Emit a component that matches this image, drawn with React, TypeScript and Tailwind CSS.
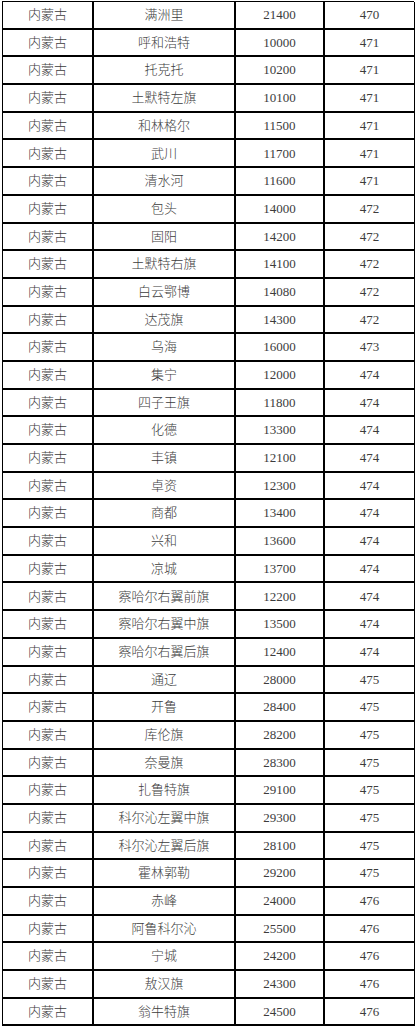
const rows: [string, string, string][] = [
  ["满洲里", "21400", "470"],
  ["呼和浩特", "10000", "471"],
  ["托克托", "10200", "471"],
  ["土默特左旗", "10100", "471"],
  ["和林格尔", "11500", "471"],
  ["武川", "11700", "471"],
  ["清水河", "11600", "471"],
  ["包头", "14000", "472"],
  ["固阳", "14200", "472"],
  ["土默特右旗", "14100", "472"],
  ["白云鄂博", "14080", "472"],
  ["达茂旗", "14300", "472"],
  ["乌海", "16000", "473"],
  ["集宁", "12000", "474"],
  ["四子王旗", "11800", "474"],
  ["化德", "13300", "474"],
  ["丰镇", "12100", "474"],
  ["卓资", "12300", "474"],
  ["商都", "13400", "474"],
  ["兴和", "13600", "474"],
  ["凉城", "13700", "474"],
  ["察哈尔右翼前旗", "12200", "474"],
  ["察哈尔右翼中旗", "13500", "474"],
  ["察哈尔右翼后旗", "12400", "474"],
  ["通辽", "28000", "475"],
  ["开鲁", "28400", "475"],
  ["库伦旗", "28200", "475"],
  ["奈曼旗", "28300", "475"],
  ["扎鲁特旗", "29100", "475"],
  ["科尔沁左翼中旗", "29300", "475"],
  ["科尔沁左翼后旗", "28100", "475"],
  ["霍林郭勒", "29200", "475"],
  ["赤峰", "24000", "476"],
  ["阿鲁科尔沁", "25500", "476"],
  ["宁城", "24200", "476"],
  ["敖汉旗", "24300", "476"],
  ["翁牛特旗", "24500", "476"],
];

const cell = "flex h-[27.7px] items-center justify-center border-b-2 border-r-2 border-black";

export default function App() {
  return (
    <div className="min-h-screen bg-white pl-[2px] pt-[1px] text-[13px] font-light text-[#3c3c3c] [font-family:'Liberation_Serif','Noto_Sans_CJK_SC',serif]">
      <div className="grid w-[412px] grid-cols-[91px_142px_89px_90px] border-l border-t border-black">
        {rows.map(([city, code, area]) => (
          <div key={city} className="contents">
            <div className={cell}>内蒙古</div>
            <div className={cell}>{city}</div>
            <div className={cell}>{code}</div>
            <div className={cell + " border-r-[1px]"}>{area}</div>
          </div>
        ))}
      </div>
    </div>
  );
}
